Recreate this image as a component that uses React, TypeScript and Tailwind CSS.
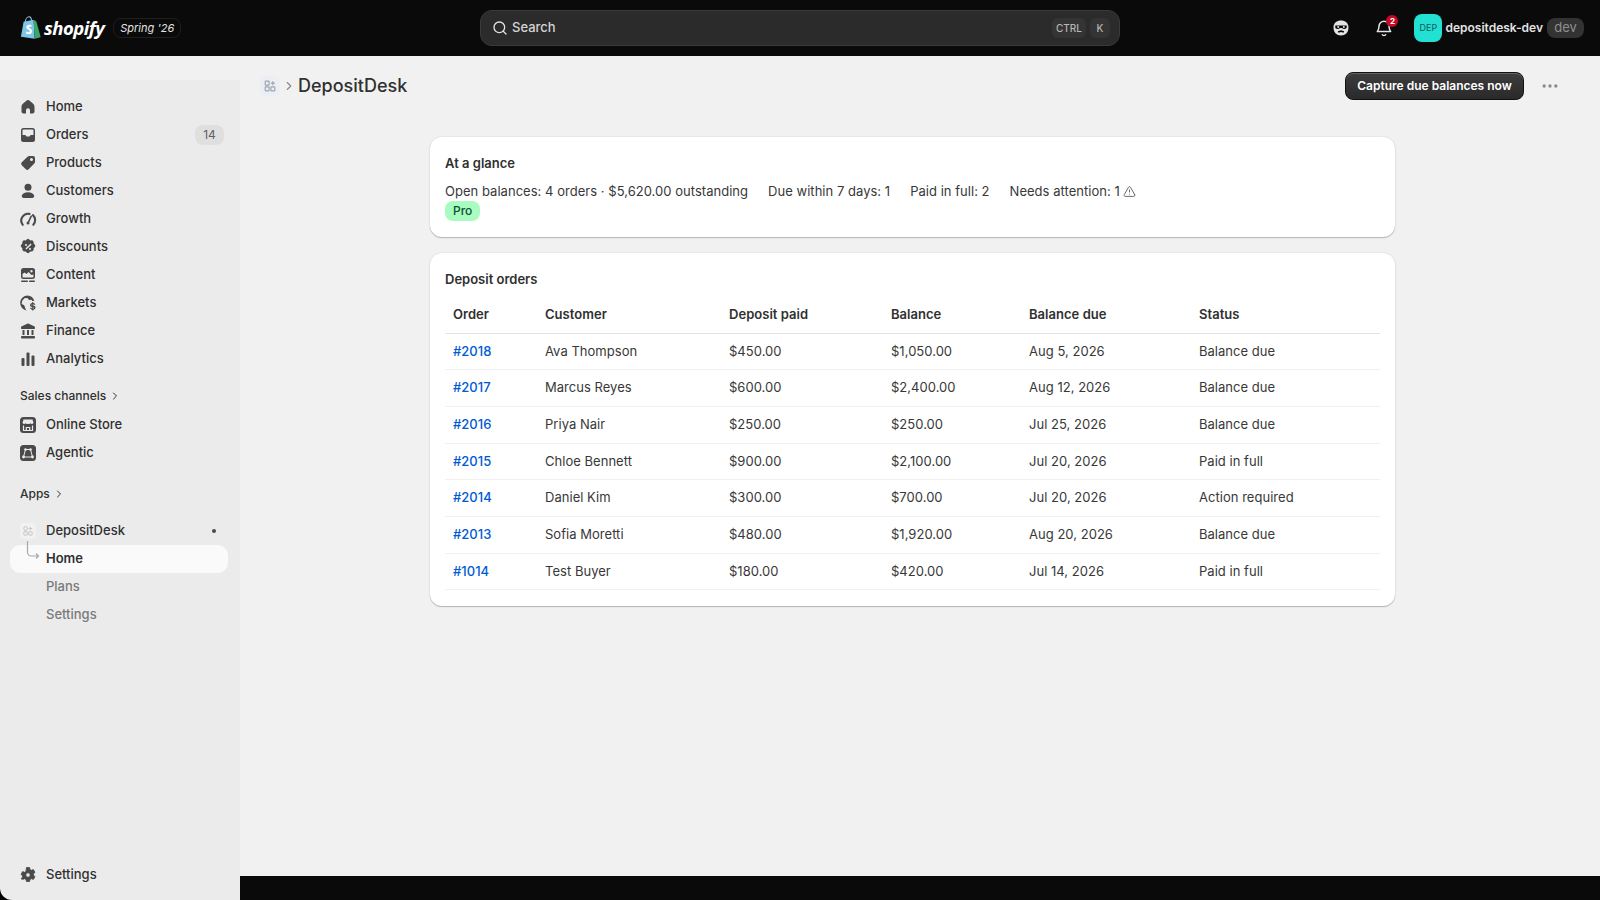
import { Search, ChevronRight, Ellipsis, TriangleAlert } from "lucide-react";
import type { ReactNode } from "react";

const FONT = "font-['Inter','Liberation_Sans',sans-serif]";

function Ico({ children }: { children: ReactNode }) {
  return (
    <svg viewBox="0 0 20 20" className="w-5 h-5 shrink-0 text-[#4a4a4a]" fill="currentColor">
      {children}
    </svg>
  );
}

const HomeIcon = () => (
  <Ico>
    <path d="M9 3.300a1.600 1.600 0 0 1 2 0l3.900 3.300c1 .8 1.600 2 1.600 3.300v4.600c0 1.100-.9 2-2 2h-2.500v-3.300a2 2 0 0 0-4 0V16.500H5.500c-1.100 0-2-.9-2-2V9.900c0-1.300.6-2.500 1.600-3.300z" />
  </Ico>
);
const OrdersIcon = () => (
  <Ico>
    <path
      fillRule="evenodd"
      d="M5.500 3h9A2.500 2.500 0 0 1 17 5.500v9a2.500 2.500 0 0 1-2.500 2.500h-9A2.500 2.500 0 0 1 3 14.500v-9A2.500 2.500 0 0 1 5.500 3m0 1.500a1 1 0 0 0-1 1V10h2.200c.7 0 1.200.4 1.500 1l.3.600h3l.3-.6c.3-.6.8-1 1.500-1h2.200V5.500a1 1 0 0 0-1-1z"
    />
  </Ico>
);
const ProductsIcon = () => (
  <Ico>
    <path
      fillRule="evenodd"
      d="M11.300 3H15a2 2 0 0 1 2 2v3.700c0 .7-.3 1.300-.7 1.800l-5.600 5.700a2 2 0 0 1-2.900 0l-4-4a2 2 0 0 1 0-2.900l5.700-5.600c.5-.4 1.100-.7 1.800-.7M13.500 8a1.500 1.500 0 1 0 0-3 1.500 1.500 0 0 0 0 3"
    />
  </Ico>
);
const CustomersIcon = () => (
  <Ico>
    <circle cx="10" cy="6.300" r="3.500" />
    <path d="M3.800 14.800c.6-2.300 2.900-3.600 6.200-3.600s5.600 1.300 6.200 3.600c.3 1.200-.7 2.200-1.900 2.200H5.700c-1.200 0-2.200-1-1.900-2.200" />
  </Ico>
);
const GrowthIcon = () => (
  <svg
    viewBox="0 0 20 20"
    className="w-5 h-5 shrink-0 text-[#4a4a4a]"
    fill="none"
    stroke="currentColor"
    strokeWidth="2.100"
    strokeLinecap="round"
  >
    <path d="M4.800 15.800a6.800 6.800 0 0 1 6.700-10.900" />
    <path d="M14.900 6.100a6.800 6.800 0 0 1 .4 9.700" />
    <path d="m13.200 7.200-2.700 5.800" strokeWidth="1.600" />
    <circle cx="10" cy="14" r="1.500" fill="currentColor" stroke="none" />
  </svg>
);
const DiscountsIcon = () => (
  <Ico>
    <path
      fillRule="evenodd"
      d="M8.700 2.500a1.800 1.800 0 0 1 2.600 0l1 .9 1.400-.1c1 0 1.900.8 1.900 1.900l.1 1.400 1 1a1.800 1.800 0 0 1 0 2.600l-1 1-.1 1.400c0 1-.9 1.900-1.900 1.900l-1.400.1-1 1a1.800 1.800 0 0 1-2.600 0l-1-1-1.400-.1c-1 0-1.900-.9-1.900-1.900l-.1-1.400-.9-1a1.800 1.800 0 0 1 0-2.600l.9-1 .1-1.400c0-1.100.9-1.900 1.900-1.900l1.400.1zM12.600 6.400l-5.200 5.200 1 1 5.200-5.200zM8 9a1 1 0 1 0 0-2 1 1 0 0 0 0 2m4 4a1 1 0 1 0 0-2 1 1 0 0 0 0 2"
    />
  </Ico>
);
const ContentIcon = () => (
  <Ico>
    <path
      fillRule="evenodd"
      d="M5.500 3h9A2.500 2.500 0 0 1 17 5.500v6a2.500 2.500 0 0 1-2.500 2.500h-9A2.500 2.500 0 0 1 3 11.500v-6A2.500 2.500 0 0 1 5.500 3m8 4.500a1.200 1.200 0 1 0 0-2.400 1.200 1.200 0 0 0 0 2.400M4.500 9v2.500a1 1 0 0 0 1 1h9a1 1 0 0 0 1-1V9.500l-2 .5-3-3-2 2-2-1.500z"
    />
    <rect x="3" y="15.500" width="7" height="1.500" rx=".7" />
    <rect x="11" y="15.500" width="6" height="1.500" rx=".7" />
  </Ico>
);
const MarketsIcon = () => (
  <Ico>
    <path d="M9.500 2.500a7.500 7.500 0 0 0-1 14.900c-.8-.7-1.300-1.700-1.500-2.800l-.8-2.300-2.500-1.300.5-3.200L6.800 5l3 .3 1.200 1.700 2.400-.3.900 1.300h2a7.500 7.500 0 0 0-6.800-5.500" />
    <path d="M14.200 9v.900c-1.300.2-2.200 1.100-2.200 2.200s.9 1.900 2.200 2.100v1.300c-.4-.1-.7-.4-.8-.8H12c.2 1.100 1 1.900 2.200 2v.800h1.100v-.8c1.300-.2 2.200-1 2.200-2.200 0-1.100-.8-1.900-2.200-2.100v-1.300c.4.100.6.400.7.700H17.400c-.2-1-1-1.800-2.100-1.900V9zm0 2.300v1.400c-.4-.1-.7-.3-.7-.7s.3-.6.700-.7m1.100 2.900c.4.100.7.300.7.700s-.3.600-.7.700z" />
  </Ico>
);
const FinanceIcon = () => (
  <Ico>
    <path d="M9.200 2.700a2 2 0 0 1 1.600 0l5.300 2.500c.6.300.9.800.9 1.400v.7c0 .4-.3.700-.7.700H3.700a.7.700 0 0 1-.7-.700v-.7c0-.6.300-1.100.9-1.400z" />
    <path d="M4.500 9h2v5h-2zM9 9h2v5H9zM13.500 9h2v5h-2z" />
    <rect x="3" y="15" width="14" height="2.500" rx=".8" />
  </Ico>
);
const AnalyticsIcon = () => (
  <Ico>
    <rect x="3.500" y="9" width="3" height="8" rx="1" />
    <rect x="8.500" y="3.500" width="3" height="13.500" rx="1" />
    <rect x="13.500" y="6.500" width="3" height="10.500" rx="1" />
  </Ico>
);
const StoreIcon = () => (
  <svg viewBox="0 0 20 20" className="w-5 h-5 shrink-0">
    <rect x="2" y="2" width="16" height="16" rx="3.500" fill="#4a4a4a" />
    <path
      d="M5.500 4.500h9l1 3.200a1.700 1.700 0 0 1-3 .6 2 2 0 0 1-2.500.4 2 2 0 0 1-2.500-.4 1.700 1.700 0 0 1-3-.6z"
      fill="#ebebeb"
    />
    <path d="M5.500 10.500v5h9v-5M8.300 15.500v-3h3.400v3" fill="none" stroke="#ebebeb" strokeWidth="1.200" />
  </svg>
);
const AgenticIcon = () => (
  <svg viewBox="0 0 20 20" className="w-5 h-5 shrink-0">
    <rect x="2" y="2" width="16" height="16" rx="3.500" fill="#4a4a4a" />
    <path d="M7.500 6.500h5l2 7.500h-9z" fill="none" stroke="#ebebeb" strokeWidth="1" />
    <circle cx="7.500" cy="6.500" r="1.300" fill="#ebebeb" />
    <circle cx="12.500" cy="6.500" r="1.300" fill="#ebebeb" />
    <circle cx="5.500" cy="14" r="1.400" fill="#ebebeb" />
    <circle cx="14.500" cy="14" r="1.400" fill="#ebebeb" />
  </svg>
);
const GearIcon = () => (
  <Ico>
    <path
      fillRule="evenodd"
      d="M8.400 2.500h3.200l.4 2 1.400.8 2-.7 1.600 2.800-1.600 1.300v1.600l1.600 1.300-1.600 2.800-2-.7-1.400.8-.4 2H8.400l-.4-2-1.400-.8-2 .7L3 13.600l1.600-1.300v-1.600L3 9.400l1.600-2.800 2 .7L8 6.500zM10 12.200a2.200 2.200 0 1 0 0-4.400 2.200 2.200 0 0 0 0 4.400"
      strokeLinejoin="round"
      stroke="currentColor"
      strokeWidth="0.800"
    />
  </Ico>
);

const AppGlyph = ({ className }: { className: string }) => (
  <svg viewBox="0 0 16 16" className={className} fill="none" stroke="currentColor" strokeWidth="1.300">
    <rect x="2.500" y="2.500" width="4.500" height="4.500" rx=".6" />
    <rect x="2.500" y="9" width="4.500" height="4.500" rx=".6" />
    <rect x="9" y="9" width="4.500" height="4.500" rx=".6" />
    <path d="M11.200 2.500v4.500M9 4.700h4.500" />
  </svg>
);

function ShopifyBag() {
  return (
    <svg viewBox="0 0 20 23" className="w-[21px] h-[24px] shrink-0">
      <path d="M.8 20 3.400 5.500 13 3.500 14 21.800z" fill="#7cc6e8" />
      <path d="M13 3.500 15.600 5.300 19.800 20.300 14 21.800z" fill="#3fa66a" />
      <path d="M5 5.500C5.300 2.800 7 .8 8.600.8c1.500 0 2.200 1.500 2.300 3.500" fill="none" stroke="#9bd3ec" strokeWidth="1" />
      <path
        d="M11 8.800c-.6-.3-1.300-.4-2-.4-2 0-3.100 1.100-3.100 2.500 0 2.100 3.300 2.200 3.300 3.600 0 .6-.4 1-1.100 1-1 0-2-.7-2-.7l-.6 2c.7.500 1.700.8 2.600.8 2.100 0 3.400-1.200 3.400-3.100 0-2.400-3.200-2.400-3.200-3.600 0-.4.300-.7 1-.7.500 0 1 .1 1.300.3z"
        fill="#fff"
      />
    </svg>
  );
}

function NavItem({ icon, label, badge }: { icon: ReactNode; label: string; badge?: string }) {
  return (
    <div className="flex items-center h-7 pl-[18px] pr-[16px]">
      <div className="w-[28px] flex">{icon}</div>
      <span className="text-[13px] font-[450] text-[#303030]">{label}</span>
      {badge && (
        <span className="ml-auto h-5 w-[29px] rounded-lg bg-[#dfdfdf] text-[12px] text-[#616161] flex items-center justify-center">
          {badge}
        </span>
      )}
    </div>
  );
}

const rows = [
  ["#2018", "Ava Thompson", "$450.00", "$1,050.00", "Aug 5, 2026", "Balance due"],
  ["#2017", "Marcus Reyes", "$600.00", "$2,400.00", "Aug 12, 2026", "Balance due"],
  ["#2016", "Priya Nair", "$250.00", "$250.00", "Jul 25, 2026", "Balance due"],
  ["#2015", "Chloe Bennett", "$900.00", "$2,100.00", "Jul 20, 2026", "Paid in full"],
  ["#2014", "Daniel Kim", "$300.00", "$700.00", "Jul 20, 2026", "Action required"],
  ["#2013", "Sofia Moretti", "$480.00", "$1,920.00", "Aug 20, 2026", "Balance due"],
  ["#1014", "Test Buyer", "$180.00", "$420.00", "Jul 14, 2026", "Paid in full"],
];

const cardClass =
  "bg-white rounded-xl px-[15px] shadow-[0_1px_0_0_rgba(26,26,26,0.07),0_1px_0_0_rgba(0,0,0,0.08),0_0_2px_rgba(0,0,0,0.12),0_1px_2px_rgba(0,0,0,0.1)]";

export default function App() {
  return (
    <div className={`${FONT} h-screen w-full flex flex-col bg-[#f1f1f1] overflow-hidden`}>
      {/* Top bar */}
      <header className="h-14 shrink-0 bg-[#0a0a0a] flex items-center pl-5 pr-4 relative">
        <div className="flex items-center w-[460px]">
          <ShopifyBag />
          <span className="ml-[3px] text-[18.500px] font-bold italic text-white tracking-[-0.5px] font-['Open_Sans',sans-serif]">
            shopify
          </span>
          <span className="ml-[9px] h-5 px-[6px] flex items-center rounded-lg text-[11px] italic font-[450] text-[#e3e3e3] border border-[#1e1e1e]">
            Spring '26
          </span>
        </div>
        <div className="h-9 w-[640px] rounded-xl bg-[#2b2b2b] border border-[#3a3a3a] flex items-center pl-[11px] pr-[9px]">
          <Search className="w-4 h-4 text-[#e3e3e3]" strokeWidth={2} />
          <span className="ml-1 text-[13px] font-[450] text-[#d4d4d4]">Search</span>
          <span className="ml-auto h-5 px-1 rounded-md bg-[#343434] text-[10px] font-medium text-[#b5b5b5] flex items-center">
            CTRL
          </span>
          <span className="ml-1 h-5 w-5 rounded-md bg-[#343434] text-[10px] font-medium text-[#b5b5b5] flex items-center justify-center">
            K
          </span>
        </div>
        <div className="ml-auto flex items-center">
          <svg viewBox="0 0 20 20" className="w-5 h-5 text-[#e3e3e3]" fill="currentColor">
            <path
              fillRule="evenodd"
              d="M10 2.500c4.200 0 7.500 2.300 7.500 7 0 5.200-3.300 8-7.500 8s-7.500-2.800-7.500-8c0-4.700 3.300-7 7.500-7M4.300 7.500v2.300c.6 1 2.100 1.500 3.400 1 .9-.4 1.200-.8 2.300-.8s1.400.4 2.300.8c1.300.5 2.800 0 3.400-1V7.500zM6.800 13.200l.7 1.600 2.500-.9 2.500.9.700-1.600-3.200-.9z"
            />
            <circle cx="7.200" cy="9" r="1" />
            <circle cx="12.800" cy="9" r="1" />
          </svg>
          <div className="relative ml-[23px] w-5 h-5">
            <svg
              viewBox="0 0 20 20"
              className="w-5 h-5 text-[#e3e3e3]"
              fill="none"
              stroke="currentColor"
              strokeWidth="1.500"
              strokeLinejoin="round"
            >
              <path d="M10 3.200a5 5 0 0 0-5 5c0 2.800-.8 4-1.700 5.400h13.400C15.800 12.200 15 11 15 8.200a5 5 0 0 0-5-5z" />
              <path d="M8 16.200a2.200 2.200 0 0 0 4 0" />
            </svg>
            <span className="absolute -top-[3px] -right-[4px] w-[12px] h-[12px] rounded-full bg-[#c70a24] text-white text-[8px] font-bold flex items-center justify-center">
              2
            </span>
          </div>
          <div className="ml-[20px] w-7 h-7 rounded-lg bg-[#22e0d2] text-[#0d5c56] text-[9px] flex items-center justify-center">
            DEP
          </div>
          <span className="ml-[3px] text-[12px] font-semibold text-[#e3e3e3]">depositdesk-dev</span>
          <span className="ml-1 h-5 w-[37px] rounded-lg bg-[#333333] text-[#8f8f8f] text-[13px] flex items-center justify-center">
            dev
          </span>
        </div>
      </header>

      <div className="flex-1 flex min-h-0">
        {/* Sidebar */}
        <div className="w-60 shrink-0 bg-black flex flex-col">
          <div className="h-6 shrink-0 bg-[#f1f1f1]" />
          <aside className="flex-1 bg-[#ebebeb] rounded-bl-xl flex flex-col pt-[13px] pb-[11px]">
            <NavItem icon={<HomeIcon />} label="Home" />
            <NavItem icon={<OrdersIcon />} label="Orders" badge="14" />
            <NavItem icon={<ProductsIcon />} label="Products" />
            <NavItem icon={<CustomersIcon />} label="Customers" />
            <NavItem icon={<GrowthIcon />} label="Growth" />
            <NavItem icon={<DiscountsIcon />} label="Discounts" />
            <NavItem icon={<ContentIcon />} label="Content" />
            <NavItem icon={<MarketsIcon />} label="Markets" />
            <NavItem icon={<FinanceIcon />} label="Finance" />
            <NavItem icon={<AnalyticsIcon />} label="Analytics" />

            <div className="flex items-center h-7 pl-5 mt-[9px] text-[12px] font-[450] text-[#303030]">
              Sales channels
              <ChevronRight className="w-3 h-3 ml-[3px] text-[#303030]" />
            </div>
            <div className="mt-px">
              <NavItem icon={<StoreIcon />} label="Online Store" />
            </div>
            <NavItem icon={<AgenticIcon />} label="Agentic" />

            <div className="flex items-center h-7 pl-5 mt-[13px] text-[12px] font-[450] text-[#303030]">
              Apps
              <ChevronRight className="w-3 h-3 ml-[3px] text-[#303030]" />
            </div>

            <div className="flex items-center h-7 pl-[20px] pr-[24px] mt-[9px]">
              <div className="w-4 h-4 rounded bg-[#f1f1f1] flex items-center justify-center mr-[10px]">
                <AppGlyph className="w-3 h-3 text-[#c4c4c4]" />
              </div>
              <span className="text-[13px] font-[450] text-[#303030]">DepositDesk</span>
              <span className="ml-auto w-[4px] h-[4px] rounded-full bg-[#4a4a4a]" />
            </div>
            <div className="ml-[10px] mr-3 h-7 rounded-[10px] bg-[#fafafa] flex items-center pl-[36px] text-[13px] font-semibold text-[#303030] relative">
              <svg
                viewBox="0 0 14 24"
                className="absolute left-[16px] -top-[4px] w-[14px] h-[24px] text-[#a8a8a8]"
                fill="none"
                stroke="currentColor"
                strokeWidth="1.200"
              >
                <path d="M1.500 0v11a4 4 0 0 0 4 4h7M10 12.500l2.500 2.500-2.500 2.500" />
              </svg>
              Home
            </div>
            <div className="flex items-center h-7 pl-[46px] text-[13px] font-[450] text-[#7a7a7a]">Plans</div>
            <div className="flex items-center h-7 pl-[46px] text-[13px] font-[450] text-[#7a7a7a]">Settings</div>

            <div className="mt-auto">
              <NavItem icon={<GearIcon />} label="Settings" />
            </div>
          </aside>
        </div>

        {/* Main */}
        <div className="flex-1 min-w-0 flex flex-col">
          <main className="flex-1 min-h-0 flex flex-col">
            <div className="flex items-center h-[60px] pl-5 pr-[38px] shrink-0">
              <div className="w-5 h-5 rounded-md bg-[#ebeef2] flex items-center justify-center">
                <AppGlyph className="w-[14px] h-[14px] text-[#9aa5b1]" />
              </div>
              <ChevronRight className="w-3.5 h-3.5 ml-[2px] text-[#8a8a8a]" />
              <h1 className="ml-[2px] text-[18px] font-[550] leading-none text-[#303030]">DepositDesk</h1>
              <button className="ml-auto h-[28px] w-[179px] rounded-lg bg-gradient-to-b from-[#3d3d3d] to-[#2a2a2a] border border-[#111] text-[12px] font-semibold text-white shadow-[inset_0_1px_0_rgba(255,255,255,0.2)]">
                Capture due balances now
              </button>
              <Ellipsis className="ml-[16px] mr-[2px] w-5 h-5 text-[#8a8a8a]" />
            </div>

            <div className="w-[965px] ml-[190px] mt-[21px] flex flex-col gap-4">
              <section className={`${cardClass} h-[100px] pt-[16px]`}>
                <h2 className="text-[13px] font-semibold leading-5 text-[#303030]">At a glance</h2>
                <div className="mt-2 flex flex-wrap items-center gap-x-5 text-[13px] leading-5 tracking-[0.03px] text-[#383838]">
                  <span>Open balances: 4 orders · $5,620.00 outstanding</span>
                  <span>Due within 7 days: 1</span>
                  <span>Paid in full: 2</span>
                  <span className="flex items-center gap-[3px]">
                    Needs attention: 1
                    <TriangleAlert className="w-[13px] h-[13px] text-[#4a4a4a]" strokeWidth={1.500} />
                  </span>
                </div>
                <span className="flex w-fit h-5 px-2 rounded-lg bg-[#a8fcc0] text-[#0c5132] text-[12px] font-medium items-center">
                  Pro
                </span>
              </section>

              <section className={`${cardClass} pt-[16px] pb-[16px]`}>
                <h2 className="text-[13px] font-semibold leading-5 text-[#303030]">Deposit orders</h2>
                <table className="w-full mt-[8px] text-[13px] tracking-[0.03px] text-[#383838] border-collapse">
                  <thead>
                    <tr className="h-[36px] border-b border-[#e3e3e3] text-left text-[#303030]">
                      <th className="w-[100px] pl-2 font-semibold">Order</th>
                      <th className="w-[184px] font-semibold">Customer</th>
                      <th className="w-[162px] font-semibold">Deposit paid</th>
                      <th className="w-[138px] font-semibold">Balance</th>
                      <th className="w-[170px] font-semibold">Balance due</th>
                      <th className="font-semibold">Status</th>
                    </tr>
                  </thead>
                  <tbody>
                    {rows.map((r) => (
                      <tr key={r[0]} className="h-[36.700px] border-b border-[#f1f1f1]">
                        <td className="pl-2 text-[#005bd3] font-[450]">{r[0]}</td>
                        <td>{r[1]}</td>
                        <td>{r[2]}</td>
                        <td>{r[3]}</td>
                        <td>{r[4]}</td>
                        <td>{r[5]}</td>
                      </tr>
                    ))}
                  </tbody>
                </table>
              </section>
            </div>
          </main>
          <div className="h-6 shrink-0 bg-[#0a0a0a]" />
        </div>
      </div>
    </div>
  );
}
